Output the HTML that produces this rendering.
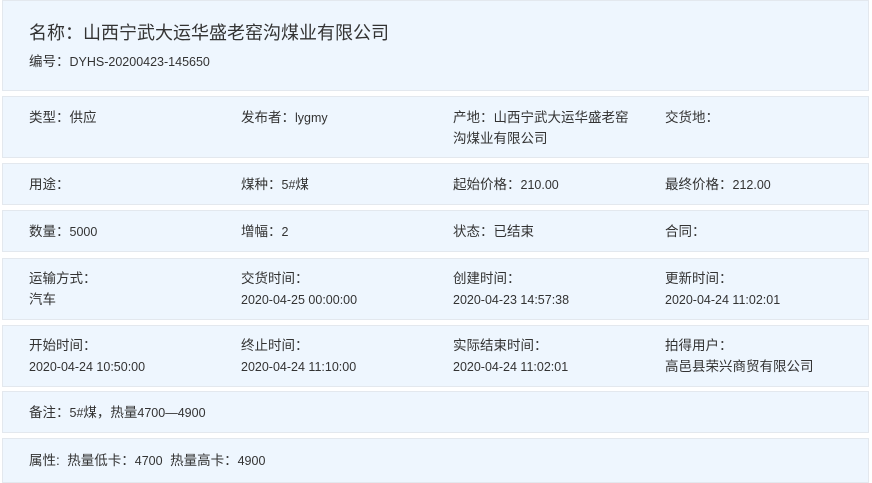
<!DOCTYPE html>
<html><head><meta charset="utf-8"><style>
body{margin:0;background:#fff;width:872px;height:479px;overflow:hidden;font-family:"Liberation Sans","Noto Sans CJK SC",sans-serif;color:#333;}
.p{position:absolute;left:2px;width:867px;background:#eef6fe;border:1px solid #e3e8ee;box-sizing:border-box;}
.c{position:absolute;font-size:13.5px;line-height:21px;}
.c i{font-style:normal;font-size:12.5px;}
.t{position:absolute;left:26px;top:18px;font-size:18px;color:#333;}
</style></head><body>
<div class="p" style="top:0;height:91px"><div class="t">名称：山西宁武大运华盛老窑沟煤业有限公司</div><div class="c" style="left:26px;top:50px">编号：<i>DYHS-20200423-145650</i></div></div>
<div class="p" style="top:96px;height:62px">
<div class="c" style="left:26px;top:10px">类型：供应</div>
<div class="c" style="left:238px;top:10px">发布者：<i>lygmy</i></div>
<div class="c" style="left:450px;top:10px;width:182px">产地：山西宁武大运华盛老窑沟煤业有限公司</div>
<div class="c" style="left:662px;top:10px">交货地：</div></div>
<div class="p" style="top:163px;height:42px">
<div class="c" style="left:26px;top:10px">用途：</div>
<div class="c" style="left:238px;top:10px">煤种：<i>5#</i>煤</div>
<div class="c" style="left:450px;top:10px">起始价格：<i>210.00</i></div>
<div class="c" style="left:662px;top:10px">最终价格：<i>212.00</i></div></div>
<div class="p" style="top:210px;height:42px">
<div class="c" style="left:26px;top:10px">数量：<i>5000</i></div>
<div class="c" style="left:238px;top:10px">增幅：<i>2</i></div>
<div class="c" style="left:450px;top:10px">状态：已结束</div>
<div class="c" style="left:662px;top:10px">合同：</div></div>
<div class="p" style="top:258px;height:62px">
<div class="c" style="left:26px;top:9px">运输方式：<br>汽车</div>
<div class="c" style="left:238px;top:9px">交货时间：<br><i>2020-04-25 00:00:00</i></div>
<div class="c" style="left:450px;top:9px">创建时间：<br><i>2020-04-23 14:57:38</i></div>
<div class="c" style="left:662px;top:9px">更新时间：<br><i>2020-04-24 11:02:01</i></div></div>
<div class="p" style="top:325px;height:62px">
<div class="c" style="left:26px;top:9px">开始时间：<br><i>2020-04-24 10:50:00</i></div>
<div class="c" style="left:238px;top:9px">终止时间：<br><i>2020-04-24 11:10:00</i></div>
<div class="c" style="left:450px;top:9px">实际结束时间：<br><i>2020-04-24 11:02:01</i></div>
<div class="c" style="left:662px;top:9px">拍得用户：<br>高邑县荣兴商贸有限公司</div></div>
<div class="p" style="top:391px;height:42px">
<div class="c" style="left:26px;top:10px">备注：<i>5#</i>煤，热量<i>4700—4900</i></div></div>
<div class="p" style="top:438px;height:45px">
<div class="c" style="left:26px;top:11px">属性:&nbsp; 热量低卡：<i>4700</i>&nbsp; 热量高卡：<i>4900</i></div></div>
</body></html>
